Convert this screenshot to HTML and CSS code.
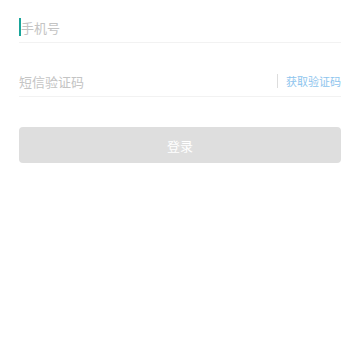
FILE: index.html
```html
<!DOCTYPE html>
<html>
<head>
  <meta charset="UTF-8">
  <link rel="stylesheet" href="styles.css">
</head>
<body>
  <div class="login-form">
    <div class="field">
      <span class="caret"></span>
      <span class="placeholder">手机号</span>
    </div>

    <div class="field">
      <span class="placeholder">短信验证码</span>
      <span class="sep"></span>
      <span class="get-code">获取验证码</span>
    </div>

    <button class="button-login">登录</button>
  </div>
</body>
</html>
```

FILE: styles.css
```css
* {
  margin: 0;
  padding: 0;
  box-sizing: border-box;
}

body {
  width: 360px;
  height: 360px;
  background: #ffffff;
  font-family: "Noto Sans CJK SC", "Noto Sans", sans-serif;
}

.login-form {
  padding: 14px 19px 0 19px;
  display: flex;
  flex-direction: column;
}

.field {
  display: flex;
  align-items: center;
  height: 29px;
  padding-bottom: 2px;
  border-bottom: 1px solid #f2f2f2;
  margin-bottom: 25px;
}

.caret {
  width: 2px;
  height: 18px;
  background: #1aa59a;
}

.placeholder {
  flex: 1;
  font-size: 13px;
  color: #c4c4c4;
  line-height: 1;
}

.sep {
  width: 1px;
  height: 14px;
  background: #dddddd;
  margin-right: 8px;
}

.get-code {
  font-size: 11px;
  color: #8ec5ee;
  line-height: 1;
}

.button-login {
  margin-top: 5px;
  height: 36px;
  border: none;
  border-radius: 4px;
  background: #dedede;
  color: #ffffff;
  font-family: "Noto Sans CJK SC", "Noto Sans", sans-serif;
  font-size: 13px;
}
```
